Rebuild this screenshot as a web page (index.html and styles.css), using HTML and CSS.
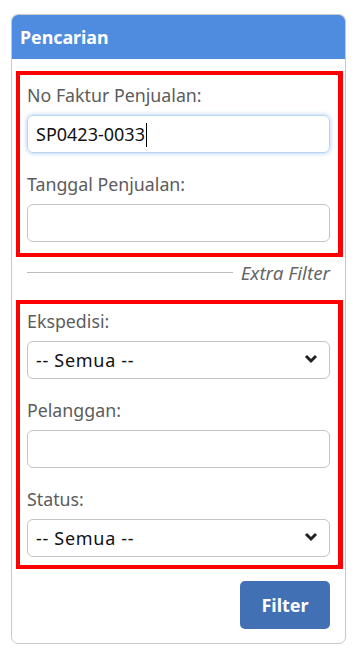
FILE: index.html
```html
<!DOCTYPE html>
<html>
<head>
<meta charset="utf-8">
<link rel="stylesheet" href="styles.css">
</head>
<body>
<div class="card">
  <div class="card-head">Pencarian</div>
  <div class="card-body">
    <div class="group">
      <label class="lbl">No Faktur Penjualan:</label>
      <div class="field focus">SP0423-0033<span class="caret"></span></div>
      <label class="lbl">Tanggal Penjualan:</label>
      <div class="field"></div>
    </div>
    <div class="divider"><span class="line"></span><span class="dtext">Extra Filter</span></div>
    <div class="group group2">
      <label class="lbl">Ekspedisi:</label>
      <div class="field select"><span class="opt">-- Semua --</span><svg class="chev" width="14" height="10" viewBox="0 0 14 10"><path d="M2 2 L7 7 L12 2" fill="none" stroke="#222" stroke-width="3"/></svg></div>
      <label class="lbl">Pelanggan:</label>
      <div class="field"></div>
      <label class="lbl">Status:</label>
      <div class="field select"><span class="opt">-- Semua --</span><svg class="chev" width="14" height="10" viewBox="0 0 14 10"><path d="M2 2 L7 7 L12 2" fill="none" stroke="#222" stroke-width="3"/></svg></div>
    </div>
    <div class="actions"><button class="btn">Filter</button></div>
  </div>
</div>
</body>
</html>
```
FILE: styles.css
```css
html, body { margin: 0; padding: 0; background: #fff; }
body { font-family: "Noto Sans", "Open Sans", sans-serif; }
.card {
  margin: 14px 0 0 11px;
  width: 333px;
  border: 1px solid #c9c9c9;
  border-radius: 7px;
  overflow: hidden;
  box-sizing: content-box;
}
.card-head {
  background: #4f8cdf;
  color: #fff;
  font-weight: bold;
  font-size: 17.8px;
  height: 45px;
  line-height: 47px;
  padding-left: 8px;
  margin-top: -1px;
}
.card-body { padding: 12px 0 14px 4px; }
.group {
  width: 318px;
  border: 4px solid #ff0000;
  border-right-width: 5px;
  padding: 6px 0 11px 0;
  display: flex;
  flex-direction: column;
}
.lbl {
  display: block;
  color: #5c5c5c;
  font-size: 17.8px;
  height: 34px;
  line-height: 28px;
  padding-left: 7px;
}
.field {
  margin-left: 7px;
  width: 293px;
  height: 36px;
  border: 1px solid #c4c4c4;
  border-radius: 6px;
  box-sizing: content-box;
  font-size: 18px;
  line-height: 36px;
  padding-left: 8px;
  color: #111;
  margin-bottom: 17px;
  position: relative;
}
.group .field:last-child { margin-bottom: 0; }
.focus {
  border-color: #b9d4f0;
  box-shadow: 0 0 5px rgba(100, 160, 230, 0.55);
}
.caret {
  display: inline-block;
  width: 1px;
  height: 24px;
  margin-left: 1px;
  background: #000;
  vertical-align: -6px;
}
.opt { letter-spacing: 0.7px; }
.chev { position: absolute; right: 11px; top: 12px; }
.divider {
  display: flex;
  align-items: center;
  height: 32px;
  margin-left: 11px;
  width: 303px;
}
.line { flex: 1; height: 1px; background: #bdbdbd; margin-right: 8px; margin-top: -2px; }
.dtext { color: #666; font-style: italic; font-size: 18.8px; }
.group2 { margin-top: 11px; padding-top: 3px; padding-bottom: 8px; }
.actions { display: flex; justify-content: flex-end; padding-right: 15px; margin-top: 12px; }
.btn {
  width: 90px;
  height: 48px;
  background: #4170b4;
  color: #fff;
  border: none;
  border-radius: 5px;
  font-family: "Noto Sans", sans-serif;
  font-weight: bold;
  font-size: 18px;
}
```
